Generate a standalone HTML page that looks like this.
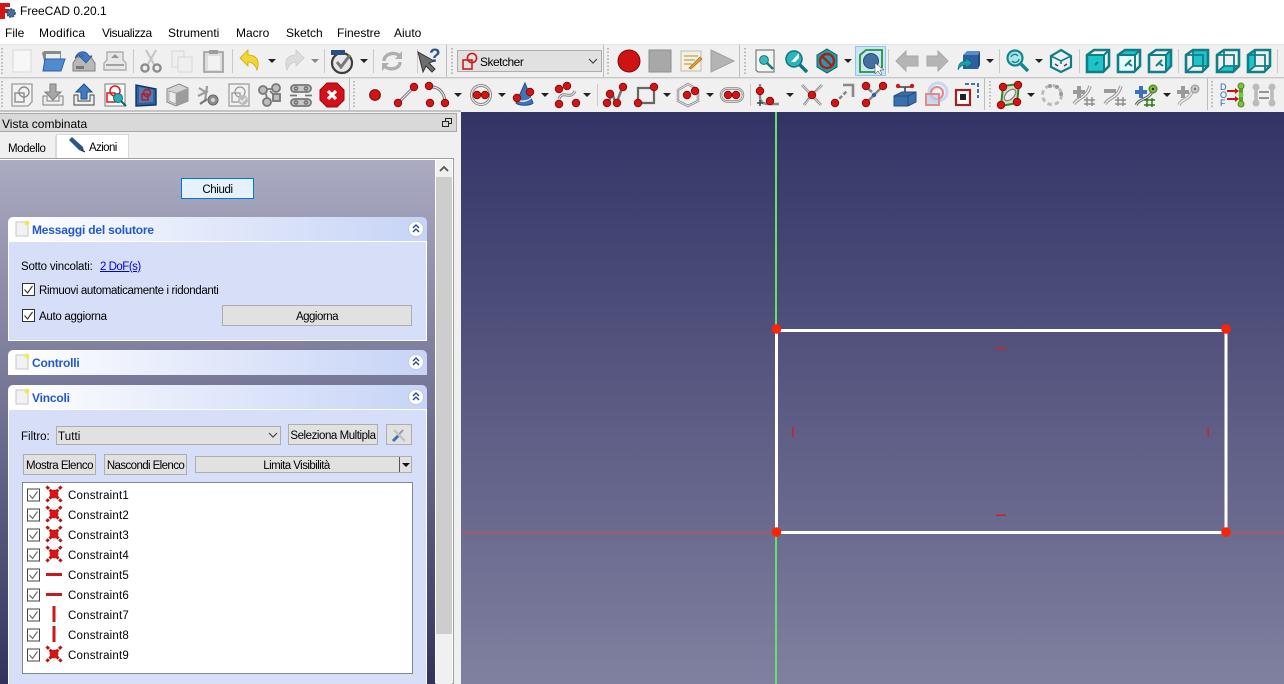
<!DOCTYPE html>
<html lang="it"><head><meta charset="utf-8"><title>FreeCAD 0.20.1</title>
<style>
html,body{margin:0;padding:0;width:1284px;height:684px;overflow:hidden;background:#f0f0f0;font-family:"Liberation Sans",sans-serif;font-size:11.5px;color:#000}
.a{position:absolute;white-space:nowrap}
.t{position:absolute;white-space:nowrap;line-height:14px}
.c{letter-spacing:.2px}
.btn{position:absolute;background:#e1e1e1;border:1px solid #adadad;box-sizing:border-box;text-align:center;white-space:nowrap;letter-spacing:-.5px}
.sec{position:absolute;left:8px;width:419px;box-sizing:border-box;background:linear-gradient(90deg,#fff 0%,#e4eafb 45%,#c7d4f6 100%);border-radius:5px 5px 0 0}
.st{position:absolute;left:24px;top:6px;font-weight:bold;font-size:12px;color:#2258cc;line-height:15px;letter-spacing:-.2px}
.body{position:absolute;left:8px;width:419px;box-sizing:border-box;background:#d6dff7;border:1px solid #fff;border-top:1px solid #fff}
.cb{position:absolute;width:13px;height:13px;box-sizing:border-box;border:1px solid #333;background:#fff}
svg{position:absolute;overflow:visible}
</style></head><body>
<div class="a" style="left:0;top:0;width:1284px;height:44px;background:#fff"></div>
<div class="t" style="left:20px;top:4px;font-size:12px">FreeCAD 0.20.1</div>
<div class="t" style="left:5px;top:26px;font-size:12px">File</div>
<div class="t" style="left:39px;top:26px;font-size:12px;letter-spacing:.2px">Modifica</div>
<div class="t" style="left:102px;top:26px;font-size:12px;letter-spacing:-.4px">Visualizza</div>
<div class="t" style="left:168px;top:26px;font-size:12px">Strumenti</div>
<div class="t" style="left:236px;top:26px;font-size:12px">Macro</div>
<div class="t" style="left:286px;top:26px;font-size:12px">Sketch</div>
<div class="t" style="left:337px;top:26px;font-size:12px">Finestre</div>
<div class="t" style="left:394px;top:26px;font-size:12px">Aiuto</div>

<svg width="1284" height="112" style="left:0;top:0">
<defs>
<g id="dot"><circle r="3.8" fill="#d41414" stroke="#7a0c0c" stroke-width=".8"/></g>
<path id="ar" d="M-4-2H4L0 2z" fill="#222"/>
<path id="cube" d="M-11-6-4-11H11V5L5 11H-11z" fill="none" stroke="#0f7f85" stroke-width="2.6"/>
</defs>
<!-- logo -->
<path d="M0 3H10V7H5V9H9V13H5V19H0z" fill="#d01818"/><circle cx="11" cy="13" r="4" fill="#4a6f96" stroke="#2e4a6e" stroke-width="1.6" stroke-dasharray="2 1"/>
<!-- toolbar backgrounds -->
<rect y="44" width="1284" height="68" fill="#f0f0f0"/>
<rect y="44" width="1284" height="1" fill="#e4e4e4"/>
<rect y="77" width="1284" height="1.4" fill="#c8c8c8"/>
<rect y="110" width="461" height="2" fill="#c4c4c4"/>
<g fill="#c9c9c9"><rect x="133" y="49" width="1" height="24"/><rect x="232" y="49" width="1" height="24"/><rect x="324" y="49" width="1" height="24"/><rect x="373" y="49" width="1" height="24"/><rect x="417" y="49" width="1" height="24"/><rect x="446" y="45" width="1" height="32" fill="#bdbdbd"/><rect x="603" y="45" width="1" height="32" fill="#bdbdbd"/><rect x="739" y="45" width="1" height="32" fill="#bdbdbd"/><rect x="888" y="49" width="1" height="24"/><rect x="999" y="49" width="1" height="24"/><rect x="1079" y="49" width="1" height="24"/><rect x="1178" y="49" width="1" height="24"/><rect x="1277" y="49" width="1" height="24"/>
<rect x="349" y="78" width="1" height="32" fill="#bdbdbd"/><rect x="597" y="84" width="1" height="22"/><rect x="750" y="84" width="1" height="22"/><rect x="984" y="78" width="1" height="32" fill="#bdbdbd"/><rect x="1207" y="78" width="1" height="32" fill="#bdbdbd"/></g>
<g fill="none" stroke="#b8b8b8" stroke-width="2" stroke-dasharray="1.5 2"><path d="M2 48V74M2 81V108M452 48V74M608 48V74M745 48V74M354 81V108M990 81V108M1212 81V108"/></g>

<!-- ROW 1 -->
<rect x="13" y="50" width="18" height="22" fill="#f7f7f7" stroke="#d8d8d8"/>
<g transform="translate(53,61)"><path d="M-11-8-9-10H8V8H-7z" fill="#8a8a8a"/><path d="M-7-7H7V3H-7z" fill="#eee"/><path d="M-8-2H12L8 10H-10z" fill="#4f8bd0" stroke="#2f5f9f"/></g>
<g transform="translate(84,61)"><path d="M-11 2-7-4H7L11 2V10H-11z" fill="#b8b8b8" stroke="#808080"/><rect x="-8" y="5" width="8" height="3" fill="#777"/><path d="M-9-3C-6-11 2-11 5-5L8-5 2 2-5-5-1-5C-2-7-6-6-9-3z" fill="#3e79c4" stroke="#24508c" stroke-width=".7"/></g>
<g transform="translate(115,61)" opacity=".75"><path d="M-11 2-8-1V-9H8V-1L11 2V9H-11z" fill="#e4e4e4" stroke="#999" stroke-width="1.4"/><path d="M0-7 4-3H-4z" fill="#777"/><rect x="-9" y="3" width="18" height="2" fill="#888"/></g>
<g transform="translate(151,61)" fill="none" stroke="#8c8c8c" stroke-width="2.4"><path d="M-5-11 4 5M5-11-4 5" stroke="#c4c4c4" stroke-width="2"/><circle cx="-6" cy="7" r="3.6"/><circle cx="6" cy="7" r="3.6"/></g>
<g transform="translate(182,61)" fill="#efefef" stroke="#d6d6d6"><path d="M-10-10H2V6H-10z"/><path d="M-4-4H10V11H-4z"/></g>
<g transform="translate(213,61)"><rect x="-9" y="-9" width="19" height="20" fill="#ddd" stroke="#9d9d9d" stroke-width="1.6"/><rect x="-5" y="-5" width="12" height="14" fill="#f2f2f2"/><rect x="-4" y="-11" width="9" height="4" fill="#9d9d9d"/></g>
<g transform="translate(250,61)"><path d="M-10-3-2-11V-6C7-6 10 0 7 9 5 3 2 1-2 1V5z" fill="#f2d634" stroke="#c6a90e" stroke-width=".8"/></g>
<use href="#ar" x="272" y="61"/>
<g transform="translate(294,61)"><path d="M10-3 2-11V-6C-7-6-10 0-7 9-5 3-2 1 2 1V5z" fill="#dcdcdc" stroke="#c8c8c8" stroke-width=".8"/></g>
<use href="#ar" x="315" y="61" opacity=".5"/>
<g transform="translate(342,61)"><circle cy="2" r="10" fill="#e7e7e7" stroke="#3d3d3d" stroke-width="2.2"/><path d="M-5 1-1 6 8-6" fill="none" stroke="#777" stroke-width="3"/><rect x="-11" y="-11" width="14" height="5" fill="#2c4d80"/></g>
<use href="#ar" x="364" y="61"/>
<g transform="translate(392,61)" fill="none" stroke="#aeaeae" stroke-width="3.4"><path d="M-8 0C-8-7 2-10 8-5M8 1C8 8-2 10-8 5"/><path d="M10-10V-2H3z" fill="#aeaeae" stroke="none"/><path d="M-10 10V2H-3z" fill="#aeaeae" stroke="none"/></g>
<g transform="translate(429,61)"><path d="M-11-9-6 11-3 5 3 11 6 8 0 2 5 0z" fill="#6d6d6d" stroke="#333"/><text x="0" y="1" font-size="19" font-weight="bold" fill="#2e5588" font-family="Liberation Sans">?</text></g>

<!-- combo -->
<rect x="457.500" y="50.500" width="144" height="21" fill="#e1e1e1" stroke="#adadad"/>
<g fill="none" stroke="#c81e1e" stroke-width="1.6"><rect x="463" y="60" width="9" height="9"/><circle cx="472" cy="58" r="4.6"/></g>
<text x="480" y="66" font-size="12" fill="#000" font-family="Liberation Sans" letter-spacing="-.5">Sketcher</text>
<path d="M589 59 593 63 597 59" fill="none" stroke="#444" stroke-width="1.2"/>

<circle cx="629" cy="61" r="11" fill="#cf1212" stroke="#7a0d0d"/>
<rect x="649" y="50" width="22" height="22" fill="#a8a8a8" stroke="#8e8e8e"/>
<g transform="translate(691,61)"><rect x="-10" y="-10" width="20" height="20" fill="#f4f1dd" stroke="#bbb"/><path d="M-7-5H7M-7-1H4M-7 3H1" stroke="#a68d55"/><path d="M-2 7 9-4 11-2 0 8z" fill="#e6a230" stroke="#9c5d10" stroke-width=".6"/></g>
<path d="M711 50 734 61 711 72z" fill="#b4b4b4" stroke="#a0a0a0"/>
<g transform="translate(765,61)"><path d="M-9-11H9V11H-7L-9 9z" fill="#f4f4f4" stroke="#666"/><circle cx="-1" cy="-1" r="4.4" fill="#3fb7bd" stroke="#11797f"/><path d="M2 2 8 8" stroke="#11797f" stroke-width="2.4"/></g>
<g transform="translate(796,61)"><circle cx="-2" cy="-2" r="8" fill="#2bb5bb" stroke="#0f7379" stroke-width="1.5"/><path d="M4 4 11 11" stroke="#0f7379" stroke-width="3.4"/><path d="M-5 1 3-8V-3L-1 1z" fill="#fff"/></g>
<g transform="translate(827,61)"><path d="M0-12 10-6V6L0 12-10 6V-6z" fill="#1aa0a8" stroke="#0f5f66"/><circle r="7" fill="none" stroke="#b81818" stroke-width="2.4"/><path d="M-5-5 5 5" stroke="#b81818" stroke-width="2.4"/></g>
<use href="#ar" x="848" y="61"/>
<rect x="855.500" y="46.500" width="30" height="29" fill="#cce4f7" stroke="#8dc3ee"/>
<g transform="translate(871,61)"><path d="M-11-6-5-11H11V6L5 11H-11z" fill="none" stroke="#1e9a30" stroke-width="1.8"/><circle r="7.5" fill="#44709f" stroke="#274b74"/><path d="M4 2V13L7 10 10 14 11 13 9 9H13z" fill="#fff" stroke="#333" stroke-width=".5"/></g>
<path d="M896 61 906 51V56H918V66H906V71z" fill="#b5b5b5" stroke="#a9a9a9"/>
<path d="M948 61 938 51V56H927V66H938V71z" fill="#b5b5b5" stroke="#a9a9a9"/>
<g transform="translate(968,61)"><path d="M-5-6H10V8H-5z" fill="#2c5f9e"/><path d="M-5-6-1-10H12L10-6z" fill="#5c8cc6"/><path d="M10-6 12-10V4L10 8z" fill="#1f4a80"/><path d="M-10 9C-10 2-6 0-2 0V-3L4 2-2 7V4C-5 4-8 5-10 9z" fill="#19a0a8" stroke="#0c6a70" stroke-width=".6"/></g>
<use href="#ar" x="990" y="61"/>
<g transform="translate(1018,61)"><circle cx="-3" cy="-3" r="7.5" fill="#aee4e7" stroke="#12878e" stroke-width="2.2"/><path d="M3 3 10 10" stroke="#12878e" stroke-width="3.4"/><path d="M-7-4A4 4 0 0 1 0-5M1-2A4 4 0 0 1-6 0" fill="none" stroke="#12878e" stroke-width="1.4"/></g>
<use href="#ar" x="1039" y="61"/>
<g transform="translate(1061,61)"><path d="M0-11 10-5V6L0 11-10 6V-5z" fill="#eef" fill-opacity=".3" stroke="#0f7f85" stroke-width="2.2"/><path d="M-10-5 0 0 10-5M0 0V3" fill="none" stroke="#0f7f85" stroke-width="1.6"/><path d="M-6 3-3 5M6 3 3 5" stroke="#444" stroke-width="1.4"/></g>
<g transform="translate(1098,61)"><path d="M-11-6H6V11H-11z" fill="#1fc4cb"/><use href="#cube"/><path d="M-11-6H6V11M6-6 11-11M-3 4 0 1" fill="none" stroke="#0f7f85" stroke-width="2"/></g>
<g transform="translate(1129,61)"><path d="M-11-6H6V11H-11z" fill="#e8fbfb"/><path d="M-11-6-4-11H11L6-6z" fill="#1fc4cb"/><use href="#cube"/><path d="M-11-6H6V11M6-6 11-11M-4 5-1 2M-1 2 2-1M-1 2 3 5" fill="none" stroke="#0f7f85" stroke-width="2"/></g>
<g transform="translate(1160,61)"><path d="M6-6 11-11V5L6 11z" fill="#1fc4cb"/><use href="#cube"/><path d="M-11-6H6V11M6-6 11-11M-4 5-1 2M-1 2 2-1M-1 2 3 5" fill="none" stroke="#0f7f85" stroke-width="2"/></g>
<g transform="translate(1197,61)"><path d="M-4-11H11V5H-4z" fill="#1fc4cb"/><use href="#cube"/><path d="M-11-6H6V11M-4-11V5H11M-11 11-4 5" fill="none" stroke="#0f7f85" stroke-width="1.8"/></g>
<g transform="translate(1228,61)"><path d="M-11 11-4 5H11L5 11z" fill="#1fc4cb"/><use href="#cube"/><path d="M-11-6H6V11M-4-11V5H11M-11 11-4 5" fill="none" stroke="#0f7f85" stroke-width="1.8"/></g>
<g transform="translate(1259,61)"><path d="M-11-6-4-11V5L-11 11z" fill="#1fc4cb"/><use href="#cube"/><path d="M-11-6H6V11M-4-11V5H11M-11 11-4 5" fill="none" stroke="#0f7f85" stroke-width="1.8"/></g>

<!-- ROW 2 -->
<g transform="translate(22,95)"><path d="M-10-11H10V7L6 11H-10z" fill="#f2f2f2" stroke="#9a9a9a" stroke-width="1.3"/><g fill="none" stroke="#8d8d8d" stroke-width="1.4"><rect x="-7" y="-2" width="9" height="9"/><circle cx="2" cy="-3" r="5"/></g></g>
<g transform="translate(53,95)"><path d="M-3-11H3V-3H8L0 5-8-3H-3z" fill="#a7a7a7" stroke="#7e7e7e"/><path d="M-10 1V10H10V1H6V6H-6V1z" fill="#eee" stroke="#7e7e7e"/></g>
<g transform="translate(84,95)"><path d="M-3 4V-3H-8L0-11 8-3H3V4z" fill="#3f7cc4" stroke="#1e4c86"/><path d="M-10 0V10H10V0H6V6H-6V0z" fill="#eee" stroke="#444"/></g>
<g transform="translate(115,95)"><rect x="-10" y="-11" width="20" height="22" fill="#fff" stroke="#777"/><rect x="-8" y="-2" width="8" height="9" fill="none" stroke="#e01515" stroke-width="1.5"/><circle cx="0" cy="-4" r="5" fill="none" stroke="#e01515" stroke-width="1.5"/><circle cx="3" cy="3" r="4.5" fill="#23b2b8" stroke="#0e6a70"/><path d="M6 6 11 11" stroke="#0e6a70" stroke-width="2.2"/></g>
<g transform="translate(146,95)"><path d="M-10-10 10-6V10L-10 11z" fill="#2d5fa2" stroke="#14335c" stroke-width="1.4"/><path d="M-7-8 7-5V7L-7 8z" fill="#4d7db8"/><g fill="none" stroke="#c01818" stroke-width="1.5"><rect x="-4" y="-1" width="6" height="6"/><circle cx="1" cy="-2" r="3.5"/></g></g>
<g transform="translate(177,95)"><path d="M-10-6 2-11 11-7V6L-1 11-10 7z" fill="#d4d4d4" stroke="#8a8a8a"/><path d="M-1-2 11-7V6L-1 11z" fill="#9d9d9d"/><path d="M-8-4-1-2V9L-8 6z" fill="#ececec" stroke="#999" stroke-width=".7"/></g>
<g transform="translate(208,95)"><path d="M-10 1 0-4M-3 7-1-9M-9-7-1-2" stroke="#9c9c9c" stroke-width="2.2" fill="none"/><circle cx="5" cy="5" r="5" fill="#8d8d8d" stroke="#666"/><circle cx="5" cy="5" r="2" fill="#d6d6d6"/><path d="M-8 9-1 4" stroke="#777" stroke-width="2.2"/></g>
<g transform="translate(239,95)"><path d="M-10-11H10V11H-10z" fill="#f2f2f2" stroke="#9a9a9a" stroke-width="1.2"/><g fill="none" stroke="#9a9a9a" stroke-width="1.3"><rect x="-7" y="-2" width="8" height="9"/><circle cx="1" cy="-3" r="5"/></g><circle cx="4" cy="5" r="5" fill="#bcbcbc"/><path d="M1 5 3 7 7 3" fill="none" stroke="#eee" stroke-width="1.4"/></g>
<g transform="translate(270,95)" fill="#bdbdbd" stroke="#777" stroke-width="1.8"><circle cx="-7" cy="-5" r="4"/><circle cx="6" cy="-7" r="4"/><circle cx="-3" cy="7" r="4"/><rect x="3" y="-1" width="7" height="7"/><path d="M-3-6H2M-4-1-3 3M0-4 3-1" fill="none"/></g>
<g transform="translate(301,95)" fill="#c8c8c8" stroke="#777" stroke-width="1.8"><rect x="-10" y="-10" width="20" height="7" rx="3.500"/><rect x="-10" y="4" width="20" height="7" rx="3.500"/><circle cx="-5" cy="-6.500" r="1.500" fill="#eee"/><circle cx="5" cy="-6.500" r="1.500" fill="#eee"/><circle cx="-5" cy="7.500" r="1.500" fill="#eee"/><circle cx="5" cy="7.500" r="1.500" fill="#eee"/><path d="M-11 .5H-4M4 .5H11" fill="none"/></g>
<g transform="translate(332,95)"><path d="M-5-12H5L12-5V5L5 12H-5L-12 5V-5z" fill="#d4111b" stroke="#8f0a10"/><path d="M-4-4 4 4M4-4-4 4" stroke="#fff" stroke-width="3.2"/></g>
<use href="#dot" transform="translate(375,95) scale(1.4)"/>
<g transform="translate(406,95)"><path d="M-8 8 8-8" stroke="#777" stroke-width="3"/><path d="M-8 8 8-8" stroke="#eee" stroke-width="1"/><use href="#dot" x="-8" y="8"/><use href="#dot" x="8" y="-8"/></g>
<g transform="translate(437,95)"><path d="M-8-8C2-9 8-2 8 8" fill="none" stroke="#777" stroke-width="3"/><path d="M-8-8C2-9 8-2 8 8" fill="none" stroke="#eee" stroke-width="1"/><use href="#dot" x="-8" y="-9"/><use href="#dot" x="8" y="8"/><use href="#dot" x="-7" y="8"/></g>
<use href="#ar" x="458" y="95"/>
<g transform="translate(481,95)"><circle r="10.500" fill="none" stroke="#888" stroke-width="1"/><circle r="8.500" fill="none" stroke="#888" stroke-width="1"/><use href="#dot" x="-4" y="0"/><use href="#dot" x="4" y="0"/></g>
<use href="#ar" x="502" y="95"/>
<g transform="translate(524,95)"><path d="M1-12-8 8C-5 11 6 11 9 8z" fill="#3d74b8" stroke="#214c84"/><path d="M-8 4C-3 8 5 6 8 2" fill="none" stroke="#eee" stroke-width="1.4"/><use href="#dot" x="-7" y="3"/><use href="#dot" x="6" y="-3"/></g>
<use href="#ar" x="545" y="95"/>
<g transform="translate(567,95)"><path d="M-8 4C-4-6 3 6 8-4" fill="none" stroke="#888" stroke-width="3"/><path d="M-8 4C-4-6 3 6 8-4" fill="none" stroke="#eee" stroke-width="1"/><use href="#dot" x="-8" y="-6"/><use href="#dot" x="0" y="-9" /><use href="#dot" x="-8" y="9"/><use href="#dot" x="9" y="8"/></g>
<use href="#ar" x="587" y="95"/>
<g transform="translate(615,95)"><path d="M-7 9-3-2 1 9 8-9" fill="none" stroke="#777" stroke-width="2.6"/><use href="#dot" x="-8" y="8"/><use href="#dot" x="-5" y="-1"/><use href="#dot" x="2" y="8"/><use href="#dot" x="8" y="-8"/></g>
<g transform="translate(646,95)"><path d="M-8-7H8V8H-8z" fill="none" stroke="#666" stroke-width="2.2"/><use href="#dot" x="-8" y="8"/><use href="#dot" x="8" y="-8"/></g>
<use href="#ar" x="667" y="95"/>
<g transform="translate(688,95)"><path d="M0-11 10-5V6L0 11-10 6V-5z" fill="none" stroke="#888" stroke-width="2.4"/><path d="M0-11 10-5V6L0 11-10 6V-5z" fill="none" stroke="#eee" stroke-width=".8"/><use href="#dot" x="-1" y="0"/><use href="#dot" x="7" y="-4"/></g>
<use href="#ar" x="710" y="95"/>
<g transform="translate(732,95)"><rect x="-11" y="-6.500" width="22" height="13" rx="6.500" fill="none" stroke="#888" stroke-width="2.4"/><rect x="-11" y="-6.500" width="22" height="13" rx="6.500" fill="none" stroke="#eee" stroke-width=".8"/><use href="#dot" x="-4" y="0"/><use href="#dot" x="4" y="0"/></g>
<g transform="translate(769,95)"><path d="M-9-11V2C-9 8-4 9 0 9H10" fill="none" stroke="#888" stroke-width="2.4"/><use href="#dot" x="-9" y="-4"/><use href="#dot" x="1" y="6"/><path d="M-9 5V11M-12 8H-6" stroke="#444" stroke-width="1.6"/></g>
<use href="#ar" x="790" y="95"/>
<g transform="translate(812,95)"><path d="M-10-10 9 10M10-10 1-1M-1 1-8 10" stroke="#888" stroke-width="2.6"/><path d="M-10-10 9 10M10-10-8 10" stroke="#eee" stroke-width=".8"/><use href="#dot" x="0" y="0" /></g>
<g transform="translate(843,95)"><path d="M-8 8 4-4" stroke="#888" stroke-width="2.6" stroke-dasharray="4 2"/><path d="M0-10H10V2" fill="none" stroke="#888" stroke-width="2.6"/><use href="#dot" x="-8" y="8"/></g>
<g transform="translate(874,95)"><path d="M-9 9 9-9M-9-9-2-3" stroke="#888" stroke-width="2.6"/><use href="#dot" x="-8" y="-9"/><use href="#dot" x="9" y="-9"/><use href="#dot" x="-8" y="8"/><circle r="2.2" fill="#2d5fa2"/></g>
<g transform="translate(905,95)"><path d="M-11 1-3-3H11V7L3 11H-11z" fill="#3a6fae" stroke="#234c80"/><path d="M-11 1H3V11M3 1 11-3" fill="none" stroke="#234c80"/><path d="M-7-8H7M0-8V-2" stroke="#555" stroke-width="1.8"/><circle cx="-7" cy="-9" r="2.2" fill="#c91919"/><circle cx="7" cy="-9" r="2.2" fill="#c91919"/></g>
<g transform="translate(936,95)" fill="none"><circle cx="2" cy="-3" r="9" stroke="#c8d6f4" stroke-width="3"/><circle cx="1" cy="-2" r="6" stroke="#e08a8a" stroke-width="2"/><rect x="-10" y="-1" width="13" height="11" fill="#bcd0ef" fill-opacity=".7" stroke="#e08a8a" stroke-width="2"/></g>
<g transform="translate(967,95)"><rect x="-11" y="-5" width="14" height="15" fill="#fff" stroke="#a32020" stroke-width="2.2"/><rect x="-7" y="-1" width="6" height="6" fill="#222"/><path d="M-2-11H11V3" fill="none" stroke="#2d5fa2" stroke-width="1.8" stroke-dasharray="4 2"/></g>
<g transform="translate(1010,95)"><path d="M-7-9 9-11 7 8-9 11z" fill="#d8d8c8" stroke="#2f8a20" stroke-width="2"/><ellipse rx="7" ry="4" transform="rotate(-45)" fill="#eee" stroke="#888" stroke-width="1.4"/><use href="#dot" x="-7" y="-8"/><use href="#dot" x="8" y="-10"/><use href="#dot" x="-9" y="10"/><use href="#dot" x="7" y="7"/></g>
<use href="#ar" x="1031" y="95"/>
<g transform="translate(1052,95)"><circle r="9.500" fill="none" stroke="#bbb" stroke-width="3" stroke-dasharray="4.500 3"/><circle cx="-2" cy="-9" r="2" fill="#999"/><circle cx="5" cy="-8" r="2" fill="#999"/><circle cx="9" cy="-1" r="2" fill="#999"/></g>
<g id="sp" transform="translate(1084,95)"><path d="M-10 9C-6 2 2 4 6-9" fill="none" stroke="#999" stroke-width="3.5"/><path d="M-10 9C-6 2 2 4 6-9" fill="none" stroke="#eee" stroke-width="1.4"/><path d="M-11-5H-7V-9H-3V-5H1V-1H-3V3H-7V-1H-11z" fill="#9a9a9a"/><path d="M3 2V11M8 2V11M0 5H11M0 9H11" stroke="#8f8f8f" stroke-width="1.5"/></g>
<g transform="translate(1115,95)"><path d="M-10 9C-6 2 2 4 6-9" fill="none" stroke="#999" stroke-width="3.5"/><path d="M-10 9C-6 2 2 4 6-9" fill="none" stroke="#eee" stroke-width="1.4"/><rect x="-11" y="-6" width="12" height="4" fill="#9a9a9a"/><path d="M3 2V11M8 2V11M0 5H11M0 9H11" stroke="#8f8f8f" stroke-width="1.5"/></g>
<g transform="translate(1146,95)"><path d="M-10 10C-6 3 2 5 6-3" fill="none" stroke="#555" stroke-width="3"/><path d="M-10 10C-6 3 2 5 6-3" fill="none" stroke="#eee" stroke-width="1"/><path d="M-11-5H-7V-9H-3V-5H1V-1H-3V3H-7V-1H-11z" fill="#3875bd"/><circle cx="7" cy="-6" r="4" fill="#7db83a" stroke="#3c7a14"/><circle cx="7" cy="-6" r="1.200" fill="#222"/><path d="M1 3V12M6 3V12M-2 5H9M-2 10H9" stroke="#2c7a18" stroke-width="1.5"/></g>
<use href="#ar" x="1167" y="95"/>
<g transform="translate(1188,95)"><path d="M-9 10C-6 3 0 6 4-3" fill="none" stroke="#aaa" stroke-width="3.5"/><path d="M-9 10C-6 3 0 6 4-3" fill="none" stroke="#eee" stroke-width="1.400"/><path d="M-11-5H-7V-9H-3V-5H1V-1H-3V3H-7V-1H-11z" fill="#9a9a9a"/><circle cx="7" cy="-6" r="4" fill="#c4c4c4" stroke="#999"/><circle cx="7" cy="-6" r="1.200" fill="#777"/></g>
<g transform="translate(1233,95)"><text x="-13" y="-5" font-size="9" fill="#2d5fb5" font-family="Liberation Sans">D</text><text x="-13" y="3" font-size="9" fill="#2d5fb5" font-family="Liberation Sans">O</text><text x="-13" y="11" font-size="9" fill="#2d5fb5" font-family="Liberation Sans">F</text><path d="M8-8V8" stroke="#5aa028" stroke-width="4"/><circle cx="8" cy="-9" r="3" fill="#7cc23e" stroke="#4f8a20"/><circle cx="8" cy="9" r="3" fill="#7cc23e" stroke="#4f8a20"/><circle cx="8" cy="0" r="2.500" fill="#7cc23e"/><path d="M-6-4H3M-6 4H3" stroke="#c01818" stroke-width="2"/><path d="M2-7 6-4 2-1zM2 1 6 4 2 7z" fill="#c01818"/></g>
<g transform="translate(1264,95)" fill="none" stroke="#bbb"><path d="M-8-8V8M8-8V8" stroke-width="3.6"/><circle cx="-8" cy="-8" r="3" fill="#bbb"/><circle cx="-8" cy="8" r="3" fill="#bbb"/><circle cx="8" cy="-8" r="3" fill="#bbb"/><circle cx="8" cy="8" r="3" fill="#bbb"/><path d="M-5-3H5M-5 3H5" stroke="#888" stroke-width="1.800"/></g>
</svg>

<!-- LEFT PANEL -->
<div class="a" style="left:0;top:113px;width:457px;height:19px;background:#d9d9d9;border:1px solid #a8a8a8;border-left:0;box-sizing:border-box"></div>
<div class="t" style="left:2px;top:117px;font-size:12px">Vista combinata</div>
<svg style="left:442px;top:118px" width="10" height="10"><rect x="3.500" y=".5" width="6" height="5" fill="none" stroke="#222"/><rect x=".5" y="3.500" width="6" height="5" fill="#d9d9d9" stroke="#222"/></svg>
<div class="a" style="left:0;top:136px;width:56px;height:23px;background:#f0f0f0;border-right:1px solid #d9d9d9;box-sizing:border-box"></div>
<div class="t" style="left:8px;top:142px;letter-spacing:-.4px">Modello</div>
<div class="a" style="left:56px;top:134px;width:73px;height:25px;background:#fff;border:1px solid #d9d9d9;border-bottom:0;box-sizing:border-box"></div>
<svg style="left:68px;top:137px" width="18" height="16"><path d="M1 3 4 0 15 10 16 15 11 13z" fill="#2a5585"/><path d="M13 13 17 15" stroke="#222"/></svg>
<div class="t" style="left:89px;top:141px;letter-spacing:-.6px">Azioni</div>
<div class="a" style="left:0;top:158px;width:454px;height:526px;background:#fff;border:1px solid #a0a0a0;border-left:0;box-sizing:border-box"></div>
<div class="a" style="left:0;top:160px;width:435px;height:524px;background:linear-gradient(180deg,#ababc2 0%,#32325f 100%)"></div>
<div class="a" style="left:436px;top:160px;width:16px;height:524px;background:#f0f0f0"></div>
<div class="a" style="left:436px;top:177px;width:16px;height:457px;background:#cdcdcd"></div>
<svg style="left:439px;top:165px" width="10" height="8"><path d="M1 6 5 2 9 6" fill="none" stroke="#555" stroke-width="1.800"/></svg>

<div class="btn" style="left:181px;top:178px;width:73px;height:21px;background:#e5f1fb;border-color:#0078d7;line-height:22px;letter-spacing:-.4px">Chiudi</div>

<div class="sec" style="top:217px;height:25px"><div class="st">Messaggi del solutore</div></div>
<div class="body" style="top:241px;height:100px"></div>
<div class="t" style="left:21px;top:260px;letter-spacing:-.2px">Sotto vincolati:</div>
<div class="t" style="left:100px;top:260px;color:#0000e0;text-decoration:underline;letter-spacing:-.5px">2 DoF(s)</div>
<div class="cb" style="left:22px;top:283px"></div><div class="t" style="left:39px;top:284px;letter-spacing:-.36px">Rimuovi automaticamente i ridondanti</div>
<div class="cb" style="left:22px;top:309px"></div><div class="t" style="left:39px;top:310px;letter-spacing:-.3px">Auto aggiorna</div>
<div class="btn" style="left:222px;top:305px;width:190px;height:21px;line-height:22px">Aggiorna</div>

<div class="sec" style="top:350px;height:25px"><div class="st">Controlli</div></div>
<div class="sec" style="top:385px;height:25px"><div class="st">Vincoli</div></div>
<div class="body" style="top:409px;height:275px;border-bottom:0"></div>
<div class="t" style="left:21px;top:430px">Filtro:</div>
<div class="btn" style="left:56px;top:426px;width:225px;height:19px;text-align:left;padding-left:1px;line-height:20px;letter-spacing:.1px">Tutti</div>
<div class="btn" style="left:288px;top:424px;width:90px;height:21px;line-height:22px;letter-spacing:-.45px">Seleziona Multipla</div>
<div class="btn" style="left:386px;top:424px;width:26px;height:21px"></div>
<div class="btn" style="left:23px;top:454px;width:73px;height:21px;line-height:22px">Mostra Elenco</div>
<div class="btn" style="left:104px;top:454px;width:83px;height:21px;line-height:22px;letter-spacing:-.6px">Nascondi Elenco</div>
<div class="btn" style="left:195px;top:456px;width:217px;height:17px;line-height:18px;padding-right:14px;letter-spacing:-.55px">Limita Visibilità</div>
<div class="a" style="left:22px;top:482px;width:391px;height:192px;background:#fff;border:1px solid #828790;box-sizing:border-box"></div>
<div class="t c" style="left:68px;top:489px">Constraint1</div>
<div class="t c" style="left:68px;top:509px">Constraint2</div>
<div class="t c" style="left:68px;top:529px">Constraint3</div>
<div class="t c" style="left:68px;top:549px">Constraint4</div>
<div class="t c" style="left:68px;top:569px">Constraint5</div>
<div class="t c" style="left:68px;top:589px">Constraint6</div>
<div class="t c" style="left:68px;top:609px">Constraint7</div>
<div class="t c" style="left:68px;top:629px">Constraint8</div>
<div class="t c" style="left:68px;top:649px">Constraint9</div>

<svg width="461" height="684" style="left:0;top:0;pointer-events:none">
<defs>
<g id="note"><rect x="0" y="1" width="12" height="14" fill="#f2f2f2" stroke="#c8c8c8"/><circle cx="11" cy="2" r="2.400" fill="#f6e94a"/></g>
<g id="col"><circle r="7.500" fill="#fff" stroke="#c4cce0"/><path d="M-3-1 0-4 3-1M-3 3 0 0 3 3" fill="none" stroke="#1d3fa0" stroke-width="1.300"/></g>
<path id="tick" d="M-4 0-1 3.500 4-3.500" fill="none" stroke="#333" stroke-width="1.100"/>
<g id="cx"><path d="M-7.500-7.500 7.500 7.500M7.500-7.500-7.500 7.500" stroke="#b01818" stroke-width="3" stroke-dasharray="3.500 1"/><circle r="4.400" fill="#d81414"/></g>
<g id="ck"><rect x="-6" y="-6" width="12" height="12" fill="#fff" stroke="#444"/><path d="M-4 0-1 3.500 4-3.500" fill="none" stroke="#666" stroke-width="1.100"/></g>
</defs>
<use href="#note" x="16" y="221"/><use href="#note" x="16" y="354"/><use href="#note" x="16" y="389"/>
<use href="#col" x="416" y="229"/><use href="#col" x="416" y="362"/><use href="#col" x="416" y="397"/>
<use href="#tick" x="28.500" y="289.500"/><use href="#tick" x="28.500" y="315.500"/>
<path d="M269 433 273 437 277 433" fill="none" stroke="#444" stroke-width="1.200"/>
<g transform="translate(399,435)"><path d="M-6 6 4-5" stroke="#9a9a9a" stroke-width="2"/><path d="M-6 6-1 1" stroke="#3f6fb0" stroke-width="3"/><path d="M-5-5 6 6" stroke="#bfbfbf" stroke-width="2"/></g>
<rect x="399" y="457" width="1" height="15" fill="#555"/><path d="M402 463H410L406 467z" fill="#111"/>
<use href="#ck" x="33.500" y="495"/><use href="#ck" x="33.500" y="515"/><use href="#ck" x="33.500" y="535"/><use href="#ck" x="33.500" y="555"/><use href="#ck" x="33.500" y="575"/><use href="#ck" x="33.500" y="595"/><use href="#ck" x="33.500" y="615"/><use href="#ck" x="33.500" y="635"/><use href="#ck" x="33.500" y="655"/>
<use href="#cx" x="54" y="494"/><use href="#cx" x="54" y="514"/><use href="#cx" x="54" y="534"/><use href="#cx" x="54" y="554"/><use href="#cx" x="54" y="654"/>
<rect x="46" y="573" width="16" height="3" fill="#c81a1a"/><rect x="46" y="593" width="16" height="3" fill="#c81a1a"/><rect x="52.500" y="606" width="3" height="16" fill="#c81a1a"/><rect x="52.500" y="626" width="3" height="16" fill="#c81a1a"/>
</svg>

<!-- VIEWPORT -->
<svg width="823" height="572" viewBox="461 112 823 572" style="left:461px;top:112px">
<defs><linearGradient id="bg" x1="0" y1="0" x2="0" y2="1"><stop offset="0" stop-color="#333366"/><stop offset="1" stop-color="#8080a0"/></linearGradient></defs>
<rect x="461" y="112" width="823" height="572" fill="url(#bg)"/>
<path d="M461 532.500H1284" stroke="#c25050" stroke-width="1.200"/>
<path d="M776 112V684" stroke="#66e066" stroke-width="2"/>
<rect x="776.500" y="330.500" width="449.500" height="202" fill="none" stroke="#fff" stroke-width="3"/>
<g fill="#ff2200"><circle cx="776.500" cy="329" r="4.800"/><circle cx="1226" cy="329" r="4.800"/><circle cx="776.500" cy="532" r="4.800"/><circle cx="1226" cy="532" r="4.800"/></g>
<g fill="#cc2222"><rect x="996" y="347.500" width="10" height="1.500"/><rect x="996" y="514.500" width="10" height="1.500"/><rect x="792" y="427" width="1.500" height="10"/><rect x="1207.500" y="427" width="1.500" height="10"/></g>
</svg>
</body></html>
